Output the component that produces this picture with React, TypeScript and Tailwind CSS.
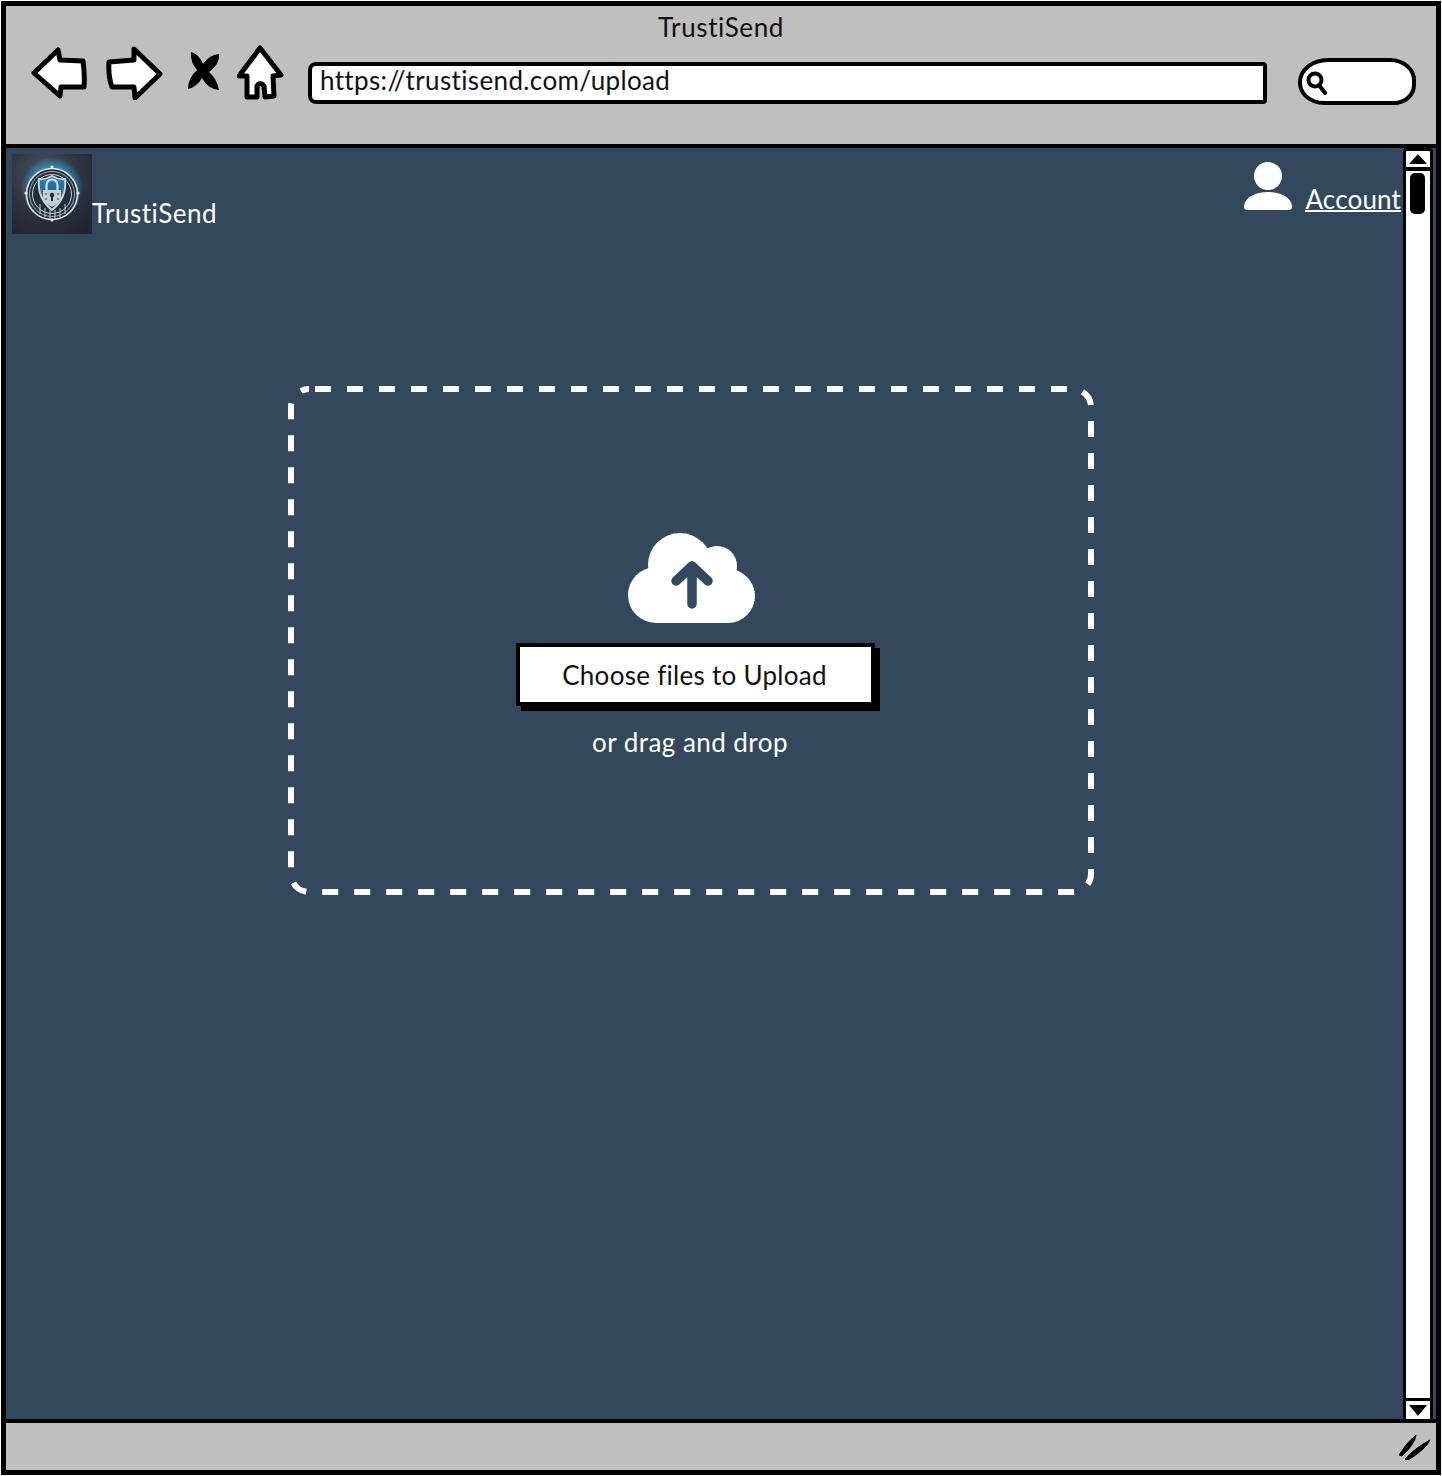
const FONT = "font-['Lato','Noto_Sans',sans-serif]";

// 브라우저 툴바 손그림 아이콘
function BackIcon() {
  return (
    <svg width="58" height="54" viewBox="0 0 58 54" className="shrink-0">
      <path d="M3 27 L27 4 L29 14 L52 15 Q54 30 53 41 L30 41 L29 50 Z" fill="#fff" stroke="#000" strokeWidth="5" strokeLinejoin="round" />
    </svg>
  );
}

function ForwardIcon() {
  return (
    <svg width="58" height="54" viewBox="0 0 58 54" className="shrink-0">
      <path d="M4 16 L29 14 L29 3 L55 28 L30 52 L29 41 L7 41 Q3 30 4 16 Z" fill="#fff" stroke="#000" strokeWidth="5" strokeLinejoin="round" />
    </svg>
  );
}

function StopIcon() {
  return (
    <svg width="32" height="38" viewBox="0 0 32 38" className="shrink-0">
      <path d="M3 0 Q11 2 15 12 Q21 3 31 2 Q32 12 21 20 Q29 27 31 38 Q20 37 14 26 Q9 35 0 37 Q0 26 9 18 Q2 10 3 0 Z" fill="#000" />
    </svg>
  );
}

function HomeIcon() {
  return (
    <svg width="48" height="56" viewBox="0 0 48 56" className="shrink-0">
      <path d="M23 3 L44 30 L36 31 L37 51 L28 52 L27 41 Q23 36 20 41 L20 52 L10 52 L10 31 L2 31 Z" fill="#fff" stroke="#000" strokeWidth="5" strokeLinejoin="round" />
    </svg>
  );
}

function SearchGlyph() {
  return (
    <svg width="24" height="26" viewBox="0 0 24 26" className="shrink-0">
      <circle cx="10" cy="10" r="6.5" fill="none" stroke="#000" strokeWidth="4" />
      <path d="M14 15 L20 23" stroke="#000" strokeWidth="4" strokeLinecap="round" />
    </svg>
  );
}

function PersonIcon() {
  return (
    <svg width="48" height="48" viewBox="0 0 48 48" className="shrink-0">
      <circle cx="24" cy="14" r="14" fill="#fff" />
      <path d="M0 44 C1 35 12 30 24 30 C36 30 47 35 48 44 Q48 48 45 48 L3 48 Q0 48 0 44 Z" fill="#fff" />
    </svg>
  );
}

function CloudUpload() {
  return (
    <svg width="128" height="90" viewBox="0 0 128 90" className="ml-[2px] block">
      <g fill="#fff">
        <circle cx="28" cy="62" r="28" />
        <circle cx="52" cy="32" r="32" />
        <circle cx="89" cy="33" r="20" />
        <circle cx="100" cy="63" r="27" />
        <rect x="28" y="40" width="72" height="50" />
      </g>
      <path d="M64 71 V35 M48 48 L64 33 L80 48" fill="none" stroke="#33485c" strokeWidth="9.5" strokeLinecap="round" strokeLinejoin="round" />
    </svg>
  );
}

function Logo() {
  return (
    <svg width="80" height="80" viewBox="0 0 80 80" className="shrink-0 block">
      <defs>
        <radialGradient id="logoBg" cx="40%" cy="25%" r="85%">
          <stop offset="0%" stopColor="#4a5361" />
          <stop offset="55%" stopColor="#2d3341" />
          <stop offset="100%" stopColor="#1f2430" />
        </radialGradient>
        <radialGradient id="glow" cx="50%" cy="50%" r="50%">
          <stop offset="70%" stopColor="#2a9bd0" stopOpacity="0.7" />
          <stop offset="100%" stopColor="#2a9bd0" stopOpacity="0" />
        </radialGradient>
        <linearGradient id="shield" x1="0" y1="0" x2="0" y2="1">
          <stop offset="0%" stopColor="#2389bb" />
          <stop offset="100%" stopColor="#2a3a4c" />
        </linearGradient>
      </defs>
      <rect width="80" height="80" fill="url(#logoBg)" />
      <circle cx="40" cy="34" r="31" fill="url(#glow)" />
      <circle cx="40" cy="40" r="26" fill="#232e3d" />
      <circle cx="40" cy="40" r="25.5" fill="none" stroke="#e4eaee" strokeWidth="1.6" />
      <circle cx="40" cy="40" r="22.5" fill="none" stroke="#9fb0bb" strokeWidth="1" />
      <circle cx="40" cy="40" r="19.5" fill="none" stroke="#c5d0d7" strokeWidth="1" />
      <g stroke="#d0d9df" strokeWidth="0.9" fill="none">
        <path d="M28 50 V60 M33 54 V63 M38 56 V65 M43 56 V65 M48 54 V63 M53 50 V60" />
      </g>
      <g fill="#e4eaee">
        <circle cx="14" cy="39" r="1.6" />
        <circle cx="66" cy="39" r="1.6" />
        <circle cx="40" cy="13" r="1.6" />
        <circle cx="40" cy="66" r="1.6" />
      </g>
      <path d="M40 22 Q47 26 53 25 Q55 44 40 56 Q25 44 27 25 Q33 26 40 22 Z" fill="url(#shield)" stroke="#c9d3da" strokeWidth="2" />
      <path d="M34.5 36 V31 A5.5 5.5 0 0 1 45.5 31 V36" fill="none" stroke="#d5dde2" strokeWidth="2.2" />
      <path d="M31 36 H49 V46 Q46 50 40 53 Q34 50 31 46 Z" fill="#c3ced5" />
      <circle cx="40" cy="41" r="2.2" fill="#1c2c3e" />
      <path d="M39 42 H41 V47 H39 Z" fill="#1c2c3e" />
      <g fill="#5a6977">
        <circle cx="34" cy="40" r="0.9" />
        <circle cx="46" cy="40" r="0.9" />
        <circle cx="34" cy="45" r="0.9" />
        <circle cx="46" cy="45" r="0.9" />
      </g>
    </svg>
  );
}

function BrowserBar() {
  return (
    <header className="h-[138px] shrink-0 bg-[#bfbfbf]">
      <div className="pt-[5px] text-center text-[26px] leading-[32px] tracking-[0.6px] text-[#111]">TrustiSend</div>
      <div className="mt-[3px] flex items-start pl-[25px]">
        <BackIcon />
        <div className="ml-[16px]"><ForwardIcon /></div>
        <div className="ml-[25px] mt-[6px]"><StopIcon /></div>
        <div className="ml-[17px] mt-[-1px]"><HomeIcon /></div>
        <div className="ml-[23px] mt-[16px] flex h-[42px] w-[959px] items-center rounded-l-[8px] rounded-r-[4px] border-[4px] border-black bg-white pb-[5px] pl-[8px] text-[26px] tracking-[0.36px] text-[#111]">
          https://trustisend.com/upload
        </div>
        <div className="ml-[31px] mt-[12px] flex h-[47px] w-[118px] items-center rounded-[30px_26px_22px_26px/24px_22px_20px_22px] border-[4px] border-black bg-white pl-[3px] pt-[3px]">
          <SearchGlyph />
        </div>
      </div>
    </header>
  );
}

function Scrollbar() {
  return (
    <aside className="mr-[3px] flex w-[30px] shrink-0 flex-col rounded-t-[4px] border-x-[3px] border-t-[3px] border-black bg-white">
      <div className="flex h-[20px] items-center justify-center border-b-[4px] border-black">
        <div className="h-0 w-0 border-x-[9px] border-b-[10px] border-x-transparent border-b-black" />
      </div>
      <div className="flex-1">
        <div className="ml-[4px] mt-[2px] h-[41px] w-[15px] rounded-[5px] bg-black" />
      </div>
      <div className="flex h-[21px] items-center justify-center border-t-[3px] border-black">
        <div className="h-0 w-0 border-x-[9px] border-t-[11px] border-x-transparent border-t-black" />
      </div>
    </aside>
  );
}

function DropZone() {
  return (
    <section className="relative ml-[282px] mt-[152px] flex h-[509px] w-[806px] flex-col items-center pt-[147px]">
      <svg width="806" height="509" viewBox="0 0 806 509" className="absolute left-0 top-0">
        <rect x="3" y="3" width="800" height="503" rx="18" fill="none" stroke="#fff" strokeWidth="6" strokeDasharray="16 16" strokeDashoffset="-6" />
      </svg>
      <CloudUpload />
      <button className="ml-[9px] mt-[20px] flex h-[63px] w-[359px] items-center justify-center border-[4px] border-black bg-white pr-[2px] pt-px text-[26px] tracking-[0.28px] text-[#111] shadow-[5px_5px_0_#000]">
        Choose files to Upload
      </button>
      <p className="-ml-[2px] mt-[20px] text-[26px] leading-[32px] tracking-[0.45px] text-white">or drag and drop</p>
    </section>
  );
}

export default function App() {
  return (
    <div className={`${FONT} h-[1476px] w-[1442px] bg-white px-px pt-px`}>
      <div className="flex h-[1474px] flex-col border-[5px] border-black">
        <BrowserBar />
        <div className="h-[4px] shrink-0 bg-black" />
        <main className="flex min-h-0 flex-1 bg-[#33485c]">
          <div className="min-w-0 flex-1">
            <div className="flex items-start justify-between pl-[6px] pr-[2px] pt-[6px]">
              <div className="flex items-end">
                <Logo />
                <span className="mb-[5px] text-[26px] leading-[32px] tracking-[0.5px] text-white">TrustiSend</span>
              </div>
              <div className="mt-[8px] flex items-end">
                <PersonIcon />
                <a className="ml-[13px] -mb-[2px] border-b-2 border-white text-[26px] leading-[21px] tracking-[0.15px] text-white">Account</a>
              </div>
            </div>
            <DropZone />
          </div>
          <Scrollbar />
        </main>
        <div className="h-[4px] shrink-0 bg-black" />
        <footer className="flex h-[47px] shrink-0 items-center justify-end bg-[#bfbfbf] pr-[5px]">
          <svg width="32" height="26" viewBox="0 0 32 26">
            <path d="M0 21 Q8 8 17 1 Q16 10 3 22 Z M6 25 Q16 14 31 6 Q26 16 9 26 Z" fill="#000" stroke="#000" strokeWidth="1" />
          </svg>
        </footer>
      </div>
    </div>
  );
}
